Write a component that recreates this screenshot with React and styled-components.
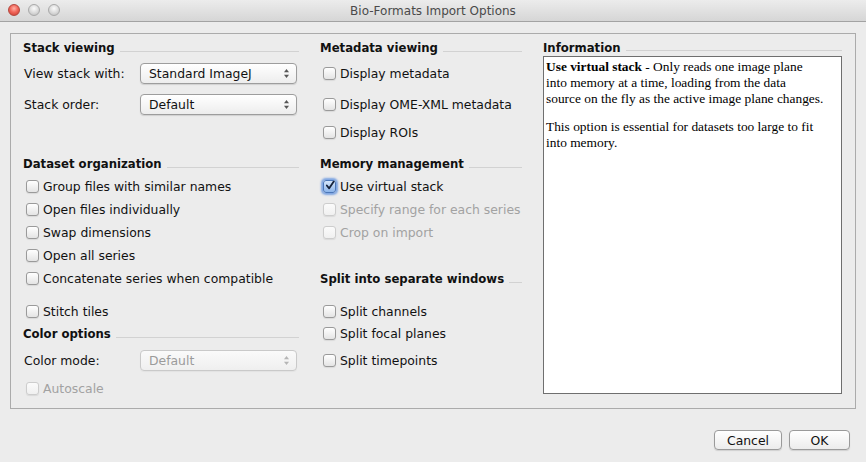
import styled, { createGlobalStyle } from "styled-components";

const GlobalStyle = createGlobalStyle`
  html, body {
    margin: 0;
    padding: 0;
    background: #ececec;
  }
  body {
    font-family: "DejaVu Sans", "Liberation Sans", sans-serif;
    font-size: 12.4px;
    color: #111;
  }
`

const Window = styled.div`
  width: 866px;
  height: 462px;
  background: #ececec;
  display: flex;
  flex-direction: column;
  overflow: hidden;
`

const TitleBar = styled.div`
  height: 21px;
  flex: none;
  position: relative;
  display: flex;
  align-items: center;
  justify-content: center;
  background: linear-gradient(#ececec, #d6d6d6);
  border-bottom: 1px solid #a3a3a3;
  font-size: 12px;
  color: #4a4a4a;
`

const Lights = styled.div`
  position: absolute;
  left: 8px;
  top: 4px;
  display: flex;
  gap: 8px;
`

const Light = styled.span`
  width: 12px;
  height: 12px;
  border-radius: 50%;
  box-sizing: border-box;
  border: 1px solid ${(p) => (p.$red ? "#b4473e" : "#a9a9a9")};
  background: ${(p) =>
    p.$red
      ? "radial-gradient(circle at 50% 35%, #ffb3a8 0%, #f2685c 45%, #c8392f 100%)"
      : "radial-gradient(circle at 50% 35%, #fbfbfb 0%, #dcdcdc 50%, #b9b9b9 100%)"};
`

const Body = styled.div`
  padding: 11px 10px 0 10px;
  display: flex;
  flex-direction: column;
`

const Panel = styled.div`
  height: 376px;
  box-sizing: border-box;
  border: 1px solid #ababab;
  padding: 3px 12px 6px 12px;
  display: grid;
  grid-template-columns: 276px 202px 299px;
  grid-template-rows: 26px 31px 28px 31px 23px 23px 23px 23px 23px 33px 22px 27px 28px 24px;
  column-gap: 21px;
`

const Cell = styled.div`
  grid-column: ${(p) => p.$col};
  grid-row: ${(p) => p.$row};
  align-self: start;
  height: 20px;
  display: flex;
  align-items: center;
  min-width: 0;
`

const Header = styled.div`
  display: flex;
  align-items: center;
  width: 100%;
  padding-top: 2px;
  font-weight: bold;
  font-size: 11.7px;
  white-space: nowrap;

  &::after {
    content: "";
    flex: 1;
    height: 1px;
    margin: 6px 0 0 5px;
    background: #d2d2d2;
  }
`

const Label = styled.span`
  width: 116px;
  padding-left: 1px;
  flex: none;
  color: #111;
`

const Select = styled.div`
  width: 157px;
  height: 21px;
  box-sizing: border-box;
  border: 1px solid ${(p) => (p.$disabled ? "#c9c9c9" : "#9d9d9d")};
  border-radius: 4px;
  background: ${(p) =>
    p.$disabled ? "linear-gradient(#fafafa, #efefef)" : "linear-gradient(#ffffff, #ededed)"};
  box-shadow: 0 1px 1px rgba(0, 0, 0, ${(p) => (p.$disabled ? 0.04 : 0.12)});
  display: flex;
  align-items: center;
  justify-content: space-between;
  padding: 0 6px 0 8px;
  color: ${(p) => (p.$disabled ? "#9b9b9b" : "#111")};
  margin-top: 1px;
`

const Check = styled.label`
  display: flex;
  align-items: center;
  gap: 4px;
  padding-left: 3px;
  padding-top: 1px;
  white-space: nowrap;
  color: ${(p) => (p.$disabled ? "#a2a2a2" : "#111")};
`

const Box = styled.span`
  width: 13px;
  height: 13px;
  box-sizing: border-box;
  border-radius: 3px;
  flex: none;
  display: flex;
  align-items: center;
  justify-content: center;
  border: 1px solid ${(p) => (p.$checked ? "#4b77b9" : p.$disabled ? "#cdcdcd" : "#9a9a9a")};
  background: ${(p) =>
    p.$checked
      ? "linear-gradient(#d5e6fb, #8db5ea)"
      : p.$disabled
      ? "linear-gradient(#fbfbfb, #f0f0f0)"
      : "linear-gradient(#ffffff, #e4e4e4)"};
  box-shadow: ${(p) =>
    p.$checked ? "0 0 2px 2px rgba(88, 140, 222, 0.75)" : "0 1px 1px rgba(0,0,0,0.08)"};
`

const InfoColumn = styled.div`
  grid-column: 3;
  grid-row: 1 / -1;
  display: flex;
  flex-direction: column;
`

const InfoHeader = styled(Header)`
  height: 17px;
  flex: none;
`

const InfoBox = styled.div`
  height: 338px;
  box-sizing: border-box;
  border: 1px solid #6f6f6f;
  background: #fff;
  padding: 2px 2px;
  font-family: "Liberation Serif", "Times New Roman", serif;
  font-size: 13.4px;
  line-height: 16px;
  color: #000;

  p {
    margin: 0 0 12px 0;
  }
`

const ButtonRow = styled.div`
  display: flex;
  justify-content: flex-end;
  gap: 7px;
  margin-top: 21px;
  padding-right: 6px;
`

const Button = styled.button`
  width: ${(p) => p.$w}px;
  height: 20px;
  box-sizing: border-box;
  border: 1px solid #9a9a9a;
  border-radius: 4px;
  background: linear-gradient(#ffffff, #ececec);
  box-shadow: 0 1px 1px rgba(0, 0, 0, 0.12);
  font-family: inherit;
  font-size: 12.4px;
  color: #111;
  padding: 0;
`

const Arrows = ({ disabled }) => (
  <svg width="7" height="11" viewBox="0 0 7 11">
    <path d="M3.5 1 L6 4.3 L1 4.3 Z" fill={disabled ? "#b5b5b5" : "#555"} />
    <path d="M3.5 10 L6 6.7 L1 6.7 Z" fill={disabled ? "#b5b5b5" : "#555"} />
  </svg>
)

const Tick = () => (
  <svg width="11" height="11" viewBox="0 0 11 11" style={{ marginTop: -2, marginLeft: 1 }}>
    <path d="M2 5.5 L4.6 8.6 L9.6 1.2" fill="none" stroke="#16223a" strokeWidth="2" strokeLinecap="round" strokeLinejoin="round" />
  </svg>
)

const CheckItem = ({ text, checked, disabled }) => (
  <Check $disabled={disabled}>
    <Box $checked={checked} $disabled={disabled}>{checked && <Tick />}</Box>
    {text}
  </Check>
)

const SelectItem = ({ label, value, disabled }) => (
  <>
    <Label>{label}</Label>
    <Select $disabled={disabled}>
      {value}
      <Arrows disabled={disabled} />
    </Select>
  </>
)

const items = [
  { col: 1, row: 1, header: "Stack viewing" },
  { col: 1, row: 2, select: "View stack with:", value: "Standard ImageJ" },
  { col: 1, row: 3, select: "Stack order:", value: "Default" },
  { col: 1, row: 5, header: "Dataset organization" },
  { col: 1, row: 6, check: "Group files with similar names" },
  { col: 1, row: 7, check: "Open files individually" },
  { col: 1, row: 8, check: "Swap dimensions" },
  { col: 1, row: 9, check: "Open all series" },
  { col: 1, row: 10, check: "Concatenate series when compatible" },
  { col: 1, row: 11, check: "Stitch tiles" },
  { col: 1, row: 12, header: "Color options" },
  { col: 1, row: 13, select: "Color mode:", value: "Default", disabled: true },
  { col: 1, row: 14, check: "Autoscale", disabled: true },

  { col: 2, row: 1, header: "Metadata viewing" },
  { col: 2, row: 2, check: "Display metadata" },
  { col: 2, row: 3, check: "Display OME-XML metadata" },
  { col: 2, row: 4, check: "Display ROIs" },
  { col: 2, row: 5, header: "Memory management" },
  { col: 2, row: 6, check: "Use virtual stack", checked: true },
  { col: 2, row: 7, check: "Specify range for each series", disabled: true },
  { col: 2, row: 8, check: "Crop on import", disabled: true },
  { col: 2, row: 10, header: "Split into separate windows" },
  { col: 2, row: 11, check: "Split channels" },
  { col: 2, row: 12, check: "Split focal planes" },
  { col: 2, row: 13, check: "Split timepoints" },
]

const App = () => {
  return (
    <>
      <GlobalStyle />
      <Window>
        <TitleBar>
          <Lights>
            <Light $red />
            <Light />
            <Light />
          </Lights>
          Bio-Formats Import Options
        </TitleBar>
        <Body>
          <Panel>
            {items.map((it) => (
              <Cell key={it.col + "-" + it.row} $col={it.col} $row={it.row}>
                {it.header && <Header>{it.header}</Header>}
                {it.select && <SelectItem label={it.select} value={it.value} disabled={it.disabled} />}
                {it.check && <CheckItem text={it.check} checked={it.checked} disabled={it.disabled} />}
              </Cell>
            ))}
            <InfoColumn>
              <InfoHeader>Information</InfoHeader>
              <InfoBox>
                <p>
                  <b>Use virtual stack</b> - Only reads one image plane<br />
                  into memory at a time, loading from the data<br />
                  source on the fly as the active image plane changes.
                </p>
                <p>
                  This option is essential for datasets too large to fit<br />
                  into memory.
                </p>
              </InfoBox>
            </InfoColumn>
          </Panel>
          <ButtonRow>
            <Button $w={68}>Cancel</Button>
            <Button $w={61}>OK</Button>
          </ButtonRow>
        </Body>
      </Window>
    </>
  )
}

export default App;
